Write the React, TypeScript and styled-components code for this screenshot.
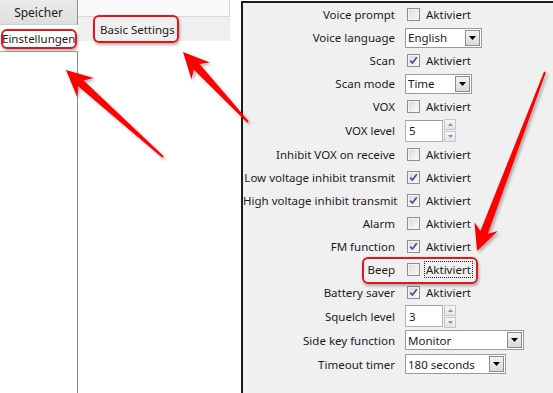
import React from 'react'
import styled, { createGlobalStyle } from 'styled-components'

const GlobalStyle = createGlobalStyle`
  html, body {
    margin: 0;
    padding: 0;
    background: #fff;
  }
  body {
    font-family: "Noto Sans", "Open Sans", sans-serif;
    font-size: 11.5px;
    color: #1b1b1b;
  }
`

const Screen = styled.div`
  position: relative;
  display: flex;
  width: 553px;
  height: 393px;
  overflow: hidden;
  background: #fff;
`

/* ---------- left column ---------- */

const Sidebar = styled.div`
  width: 78px;
  display: flex;
  flex-direction: column;
`

const SideButton = styled.div`
  height: 24px;
  display: flex;
  align-items: center;
  justify-content: center;
  font-size: 12px;
  background: linear-gradient(#ebebeb, #dedede);
  border-right: 1px solid #8f8f8f;
  border-bottom: 1px solid #cfcfcf;
`

const SideItem = styled.div`
  height: 26px;
  display: flex;
  align-items: center;
  padding-left: 2px;
  white-space: nowrap;
`

const SideList = styled.div`
  flex: 1;
  border-top: 1px solid #a8a8a8;
  border-right: 1px solid #8a8a8a;
`

/* ---------- middle column ---------- */

const Middle = styled.div`
  width: 163px;
  display: flex;
  flex-direction: column;
`

const TopStrip = styled.div`
  width: 151px;
  height: 16px;
  background: #f9f9f9;
  border-right: 1px solid #d4d4d4;
  border-bottom: 1px solid #d8d8d8;
`

const TabBar = styled.div`
  width: 152px;
  height: 24px;
  display: flex;
  align-items: center;
  padding-left: 22px;
  box-sizing: border-box;
  background: #efefef;
`

/* ---------- settings panel ---------- */

const Panel = styled.div`
  flex: 1;
  margin-top: 1px;
  border-left: 2px solid #1c1c1c;
  border-top: 2px solid #1c1c1c;
  background: #f0f0f0;
`

const Row = styled.div<{ $h?: number }>`
  display: flex;
  align-items: center;
  height: ${p => p.$h ?? 23}px;
`

const Label = styled.div`
  width: 152px;
  flex: none;
  text-align: right;
  white-space: nowrap;
  margin-right: 10px;
`

const CheckWrap = styled.div`
  display: flex;
  align-items: center;
  padding-left: 2px;
`

const Box = styled.span`
  width: 11px;
  height: 11px;
  border: 1px solid #8e8f8f;
  background: linear-gradient(135deg, #d9d9d9, #fcfcfc);
  box-shadow: inset 0 0 0 1px #f4f4f4;
  display: flex;
  align-items: center;
  justify-content: center;
`

const CheckText = styled.span<{ $focus?: boolean }>`
  margin-left: 5px;
  padding: 0 1px;
  outline: ${p => (p.$focus ? '1px dotted #222' : 'none')};
  outline-offset: 0;
`

const Select = styled.div<{ $w: number }>`
  width: ${p => p.$w}px;
  height: 20px;
  box-sizing: border-box;
  border: 1px solid #9a9a9a;
  background: #fff;
  display: flex;
  align-items: center;
  padding-left: 2px;
  padding-right: 1px;
`

const SelectText = styled.span`
  flex: 1;
  white-space: nowrap;
`

const DropButton = styled.span`
  width: 13px;
  height: 14px;
  border: 1px solid #8c8c8c;
  background: linear-gradient(#f4f4f4, #d9d9d9);
  display: flex;
  align-items: center;
  justify-content: center;
`

const Spin = styled.div`
  display: flex;
  align-items: center;
`

const SpinInput = styled.div`
  width: 38px;
  height: 22px;
  box-sizing: border-box;
  border: 1px solid #b4b4b4;
  border-top-color: #9c9c9c;
  background: #fff;
  padding-left: 3px;
  display: flex;
  align-items: center;
`

const SpinButtons = styled.div`
  display: flex;
  flex-direction: column;
  gap: 1px;
  margin-left: 1px;
`

const SpinButton = styled.span`
  width: 10px;
  height: 9px;
  border: 1px solid #c3c7cf;
  background: linear-gradient(#f6f6f6, #e4e4e4);
  display: flex;
  align-items: center;
  justify-content: center;
`

/* ---------- annotations ---------- */

const Highlight = styled.div<{ $x: number; $y: number; $w: number; $h: number }>`
  position: absolute;
  left: ${p => p.$x}px;
  top: ${p => p.$y}px;
  width: ${p => p.$w}px;
  height: ${p => p.$h}px;
  box-sizing: border-box;
  border: 2px solid #e3151d;
  border-radius: 6px;
  box-shadow: 1px 2px 3px rgba(0, 0, 0, 0.3);
  pointer-events: none;
`

const Overlay = styled.svg`
  position: absolute;
  left: 0;
  top: 0;
  pointer-events: none;
`

function Check({ on, focus }: { on?: boolean; focus?: boolean }) {
  return (
    <CheckWrap>
      <Box>
        {on && (
          <svg width="9" height="9" viewBox="0 0 9 9">
            <path d="M1.2 4.6 L3.4 7 L7.8 1.3" fill="none" stroke="#3a5394" strokeWidth="1.7" />
          </svg>
        )}
      </Box>
      <CheckText $focus={focus}>Aktiviert</CheckText>
    </CheckWrap>
  )
}

function Combo({ value, width }: { value: string; width: number }) {
  return (
    <Select $w={width}>
      <SelectText>{value}</SelectText>
      <DropButton>
        <svg width="7" height="4" viewBox="0 0 7 4">
          <path d="M0 0 H7 L3.5 4 Z" fill="#000" />
        </svg>
      </DropButton>
    </Select>
  )
}

function Spinner({ value }: { value: string }) {
  return (
    <Spin>
      <SpinInput>{value}</SpinInput>
      <SpinButtons>
        <SpinButton>
          <svg width="5" height="3" viewBox="0 0 5 3">
            <path d="M0 3 H5 L2.5 0 Z" fill="#7f93b5" />
          </svg>
        </SpinButton>
        <SpinButton>
          <svg width="5" height="3" viewBox="0 0 5 3">
            <path d="M0 0 H5 L2.5 3 Z" fill="#7f93b5" />
          </svg>
        </SpinButton>
      </SpinButtons>
    </Spin>
  )
}

// polygon for a tapering annotation arrow, tail -> tip
function arrowPoints(x1: number, y1: number, x2: number, y2: number) {
  const dx = x2 - x1
  const dy = y2 - y1
  const len = Math.hypot(dx, dy)
  const ux = dx / len
  const uy = dy / len
  const nx = -uy
  const ny = ux
  const head = 26
  const half = 12.5
  const p = (a: number, b: number) => `${(x1 + ux * a + nx * b).toFixed(1)},${(y1 + uy * a + ny * b).toFixed(1)}`
  return [
    p(0, -1),
    p(len - head + 6, -4),
    p(len - head, -half),
    p(len, 0),
    p(len - head, half),
    p(len - head + 6, 4),
    p(0, 1),
  ].join(' ')
}

const arrows = [
  { from: [163, 157], to: [66, 70] },
  { from: [248, 122], to: [183, 52] },
  { from: [545, 72], to: [477, 251] },
]

const rows: { label: string; h?: number; control: React.ReactNode }[] = [
  { label: 'Voice prompt', control: <Check /> },
  { label: 'Voice language', control: <Combo value="English" width={77} /> },
  { label: 'Scan', control: <Check on /> },
  { label: 'Scan mode', control: <Combo value="Time" width={67} /> },
  { label: 'VOX', control: <Check /> },
  { label: 'VOX level', h: 25, control: <Spinner value="5" /> },
  { label: 'Inhibit VOX on receive', control: <Check /> },
  { label: 'Low voltage inhibit transmit', control: <Check on /> },
  { label: 'High voltage inhibit transmit', control: <Check on /> },
  { label: 'Alarm', control: <Check /> },
  { label: 'FM function', control: <Check on /> },
  { label: 'Beep', control: <Check focus /> },
  { label: 'Battery saver', control: <Check on /> },
  { label: 'Squelch level', h: 24, control: <Spinner value="3" /> },
  { label: 'Side key function', h: 24, control: <Combo value="Monitor" width={119} /> },
  { label: 'Timeout timer', h: 24, control: <Combo value="180 seconds" width={101} /> },
]

export default function App() {
  return (
    <>
      <GlobalStyle />
      <Screen>
        <Sidebar>
          <SideButton>Speicher</SideButton>
          <SideItem>Einstellungen</SideItem>
          <SideList />
        </Sidebar>

        <Middle>
          <TopStrip />
          <TabBar>Basic Settings</TabBar>
        </Middle>

        <Panel>
          {rows.map(r => (
            <Row key={r.label} $h={r.h}>
              <Label>{r.label}</Label>
              {r.control}
            </Row>
          ))}
        </Panel>

        <Highlight $x={1} $y={29} $w={76} $h={20} />
        <Highlight $x={93} $y={15} $w={86} $h={28} />
        <Highlight $x={362} $y={257} $w={116} $h={27} />

        <Overlay width="553" height="393" viewBox="0 0 553 393">
          <defs>
            <filter id="arrowShadow" x="-20%" y="-20%" width="140%" height="140%">
              <feDropShadow dx="2" dy="2" stdDeviation="1.6" floodColor="#000" floodOpacity="0.3" />
            </filter>
          </defs>
          {arrows.map((a, i) => (
            <polygon
              key={i}
              points={arrowPoints(a.from[0], a.from[1], a.to[0], a.to[1])}
              fill="#fe0000"
              filter="url(#arrowShadow)"
            />
          ))}
        </Overlay>
      </Screen>
    </>
  )
}
